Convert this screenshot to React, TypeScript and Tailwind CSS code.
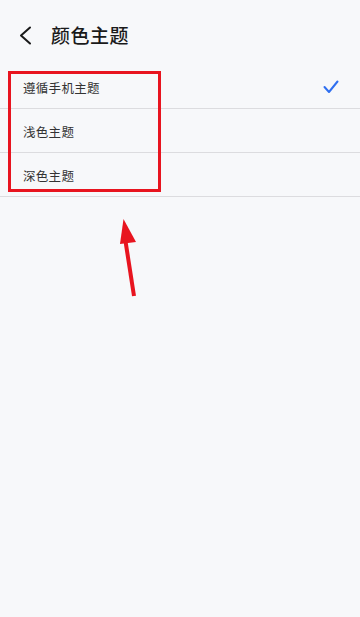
import { useState } from "react";

const OPTIONS = ["遵循手机主题", "浅色主题", "深色主题"];

function BackIcon() {
  return (
    <svg width="14" height="19" viewBox="0 0 14 19" fill="none" className="shrink-0">
      <path d="M12 1.5 L3 9.5 L12 17.5" stroke="#1a1a1a" strokeWidth="2" strokeLinecap="round" strokeLinejoin="round" />
    </svg>
  );
}

function CheckIcon() {
  return (
    <svg width="16" height="14" viewBox="0 0 16 14" fill="none">
      <path d="M1.5 7 L6 12 L14.5 1.5" stroke="#2f6ff0" strokeWidth="2" strokeLinecap="round" strokeLinejoin="round" />
    </svg>
  );
}

export default function App() {
  const [selected, setSelected] = useState(0);

  return (
    <div
      className="relative w-[360px] h-[617px] bg-[#f7f8fa] overflow-hidden"
      style={{ fontFamily: '"Noto Sans CJK SC", "Noto Sans", sans-serif' }}
    >
      {/* Header */}
      <div className="h-[65px] flex items-center pl-[18px] pt-[6px]">
        <BackIcon />
        <h1 className="ml-[19px] -mt-[2px] text-[19px] font-medium text-[#1a1a1a] leading-none tracking-[0.5px]">颜色主题</h1>
      </div>

      {/* Options */}
      <ul>
        {OPTIONS.map((label, i) => (
          <li
            key={label}
            onClick={() => setSelected(i)}
            className="h-[44px] box-border border-b border-[#dcdcdf] flex items-center justify-between pl-[23px] pr-[21px]"
          >
            <span className="text-[12.5px] text-[#333333] tracking-[0.3px] pt-[3px]">{label}</span>
            {selected === i && <CheckIcon />}
          </li>
        ))}
      </ul>

      {/* Annotation box */}
      <div className="absolute left-[8px] top-[71px] w-[153px] h-[121px] border-[3.5px] border-[#e8141f] pointer-events-none" />

      {/* Annotation arrow */}
      <svg className="absolute left-0 top-0 pointer-events-none" width="360" height="617" viewBox="0 0 360 617">
        <line x1="125" y1="238" x2="134" y2="296" stroke="#e8141f" strokeWidth="4" />
        <polygon points="123.5,219 120,244 136,242" fill="#e8141f" />
      </svg>
    </div>
  );
}
